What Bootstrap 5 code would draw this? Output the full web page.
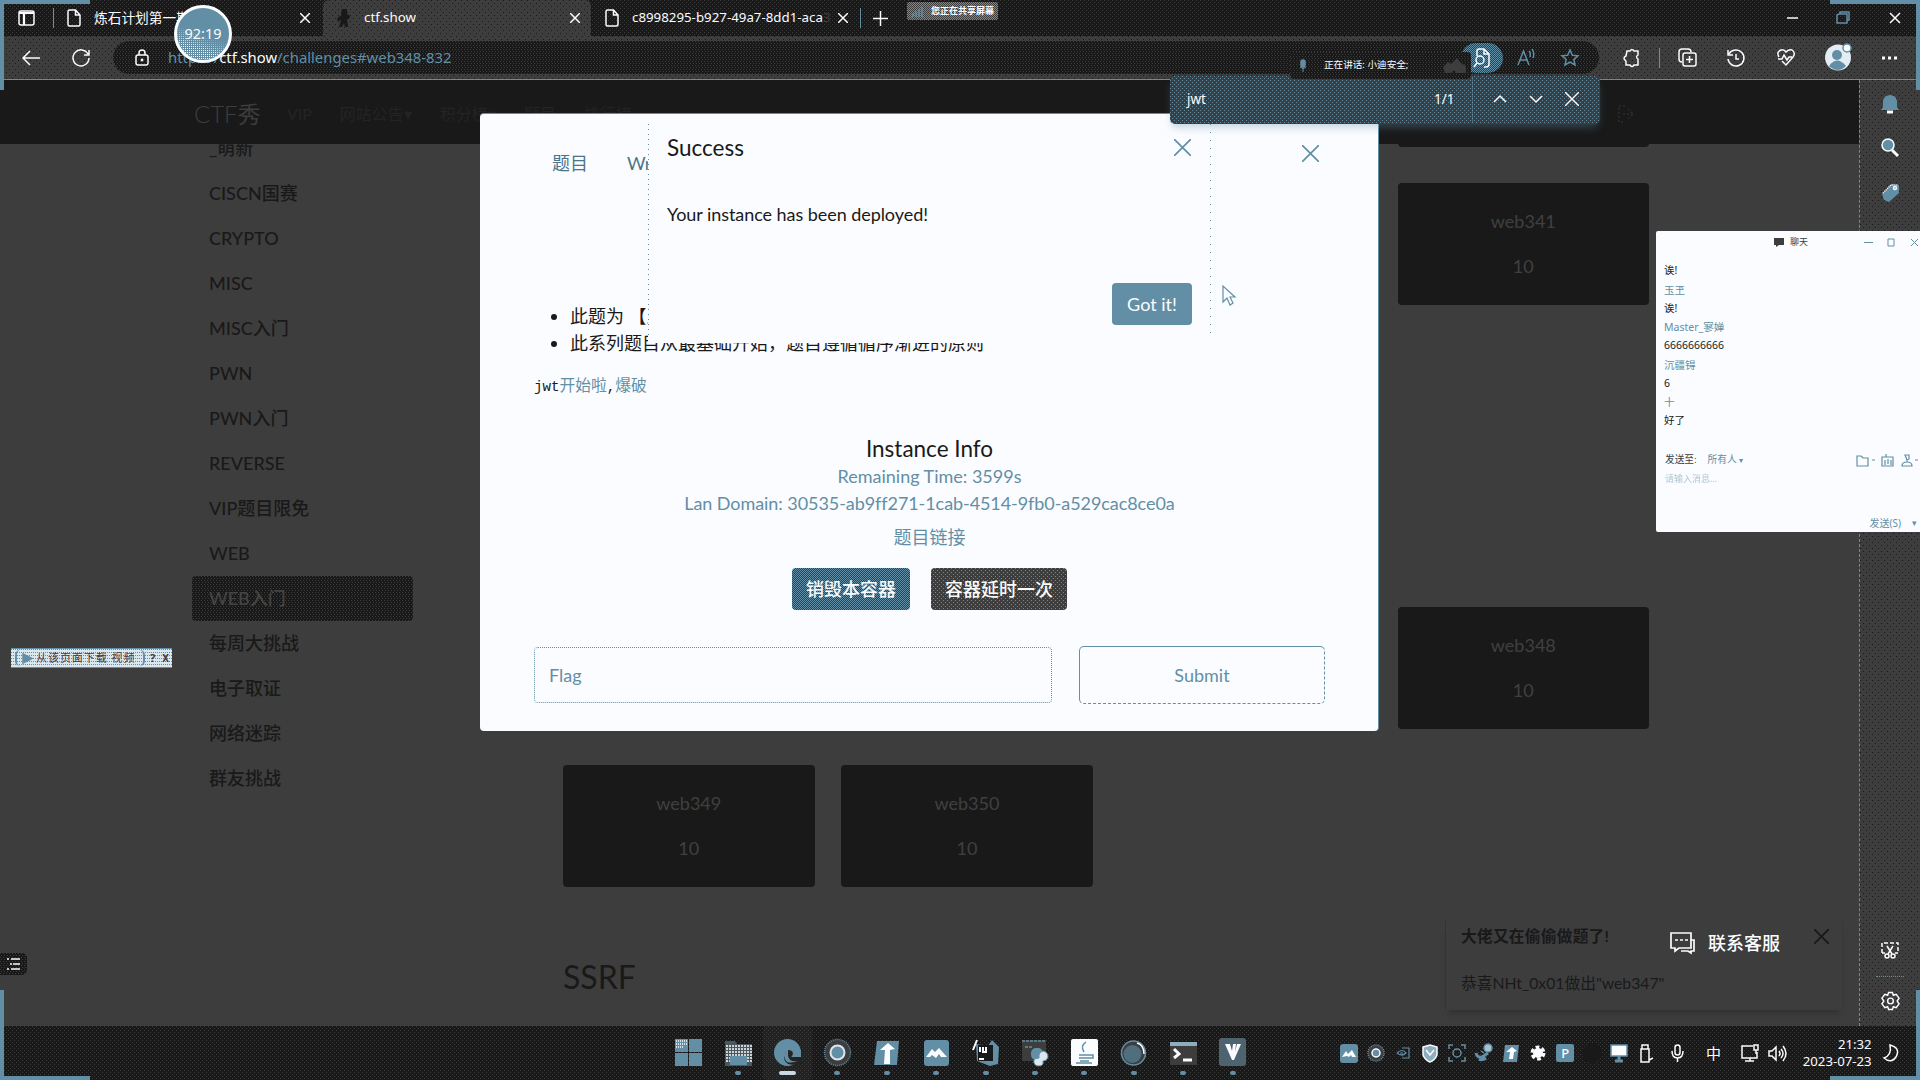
<!DOCTYPE html>
<html lang="zh-CN">
<head>
<meta charset="utf-8">
<title>ctf.show</title>
<link href="https://cdn.jsdelivr.net/npm/bootstrap@5.3.0/dist/css/bootstrap.min.css" rel="stylesheet">
<style>
:root{--ink:#191919;--gray:#3d3d3d;--blue:#628fa5;--paper:#fbfcff}
html,body{width:1920px;height:1080px;overflow:hidden;margin:0}
body{background:var(--gray);color:var(--ink);font-family:"Noto Sans","Noto Sans CJK SC",sans-serif;font-size:15px;line-height:1.5}
svg{display:block;flex:none;fill:none;stroke:currentColor;stroke-width:1.5;overflow:visible}
.fixw{flex:none}
.screen{width:1920px;height:1080px;position:relative;display:flex;flex-direction:column}
.lato{font-family:Lato,"Noto Sans CJK SC",sans-serif}
.grain-d{background-color:#191919;background-image:conic-gradient(from 0deg at 1px 1px,transparent 270deg,#3d3d3d 0),conic-gradient(from 0deg at 1px 1px,transparent 270deg,#3d3d3d 0);background-size:4px 4px;background-position:0 0,2px 2px}
.grain-g{background-color:#3d3d3d;background-image:conic-gradient(from 0deg at 1px 1px,transparent 270deg,#191919 0),conic-gradient(from 0deg at 1px 1px,transparent 270deg,#191919 0);background-size:6px 6px;background-position:0 0,3px 3px}
.grain-m{background-color:#191919;background-image:conic-gradient(from 0deg at 1px 1px,transparent 270deg,#3d3d3d 0),conic-gradient(from 0deg at 1px 1px,transparent 270deg,#3d3d3d 0);background-size:3px 4px;background-position:0 0,1px 2px}
.grain-b{background-color:#3d3d3d;background-image:conic-gradient(from 0deg at 1px 1px,transparent 270deg,#628fa5 0),conic-gradient(from 0deg at 1px 1px,transparent 270deg,#628fa5 0);background-size:4px 4px;background-position:0 0,2px 2px}
.grain-bb{background-color:#3d3d3d;background-image:conic-gradient(from 0deg at 1px 1px,transparent 270deg,#628fa5 0),conic-gradient(from 0deg at 1px 1px,transparent 270deg,#628fa5 0);background-size:2px 2px;background-position:0 0,1px 1px}
.tabs-bar{height:36px;color:var(--paper);font-size:14px;flex:none}
.tab{height:36px;display:flex;align-items:center;white-space:nowrap;overflow:hidden;flex:none}
.vline{width:1px;height:20px;background:var(--blue);flex:none}
.tool-bar{height:44px;color:var(--paper);border-bottom:1px solid var(--blue);flex:none}
.url-pill{height:33px;width:1486px;border-radius:17px;margin-left:23px;color:var(--blue);font-size:14.85px}
.main-row{height:946px;flex:none;display:flex}
.site{width:1860px;overflow:hidden;border-right:1px dashed var(--blue);position:relative}
.side-rail{width:60px;color:var(--paper)}
.site-nav{height:64px;background:var(--ink);position:relative;z-index:2;color:var(--gray);padding-left:194px;padding-top:3px}
.site-body{display:flex;margin-top:-18px;padding-left:192px;font-size:18px}
.cats{width:221px;flex:none}
.cats a{display:flex;align-items:center;height:45px;padding-left:17px;color:var(--ink);text-decoration:none;font-weight:500;border-radius:4px}
.cats a.active{color:#454545}
.board{margin-left:150px;width:1114px;margin-top:-101px}
.chal-grid{display:grid;grid-template-columns:repeat(4,251.5px);gap:36px 26.7px}
.chal{height:122px;background:var(--ink);border-radius:4px;color:#404040;text-align:center;padding-top:16px;line-height:44.5px}
.board h3{font-size:32px;height:107.5px;margin:0;color:var(--ink);font-weight:400;line-height:38px}
.dlg{position:absolute;left:480px;top:113px;width:899px;height:618px;background:var(--paper);border-top:1px solid var(--blue);border-right:1px solid var(--blue);border-radius:4px;z-index:5;font-size:18px;padding:35px 53px 0 54px}
.dlg .tabs-line{height:28px;padding-left:18px;color:#4c7488;line-height:28px}
.dlg ul{margin:126px 0 0;padding-left:36px;line-height:27px;white-space:nowrap}
.pre-line{font-family:"Liberation Mono","Noto Sans CJK SC",monospace;font-size:14.2px;line-height:24px;margin-top:18px;white-space:nowrap}
.pre-line i{font-style:normal;font-size:15.75px;color:var(--blue)}
.inst{text-align:center;color:var(--blue)}
.inst h5{font-size:22.5px;font-weight:400;margin:0;line-height:28px;color:var(--ink)}
.btn-dk{height:42px;color:var(--paper);border-radius:4px;font-size:18px;padding:0 14px;border:0;line-height:42px;font-weight:500}
.flag{width:518px;height:56px;border:1px dotted var(--blue);border-radius:4px;color:var(--blue);padding:0 14px;line-height:54px;margin-top:1px}
.sub{width:246px;height:58px;border:1px dashed var(--blue);border-top-style:solid;border-left-style:solid;border-radius:5px;color:var(--blue);text-align:center;line-height:56px}
.alertbox{position:absolute;left:648px;top:116px;width:563px;height:227px;background:var(--paper);z-index:6;font-size:18px;padding:16px 19px 0 18px}
.alertbox:before,.alertbox:after{content:"";position:absolute;top:8px;height:213px;width:1px;left:0;background:repeating-linear-gradient(var(--blue) 0 1px,transparent 1px 5px)}
.alertbox:after{left:562px;background:repeating-linear-gradient(var(--blue) 0 1px,transparent 1px 8px)}
.got{width:80px;height:42px;background:var(--blue);color:var(--paper);border-radius:4px;line-height:42px;text-align:center}
.findbar{position:absolute;left:1170px;top:76px;width:430px;height:48px;border-radius:5px;color:var(--paper);z-index:8;font-size:13.5px;padding-left:17px;padding-bottom:2px;box-shadow:0 5px 9px -2px #628fa566}
.speak{position:absolute;left:1290px;top:52px;width:181px;height:27px;z-index:9;color:var(--paper);font-size:10.5px;border-radius:4px;padding-left:9px}
.timer{position:absolute;left:174px;top:5px;width:58px;height:58px;border-radius:50%;border:3px solid var(--paper);background:var(--blue);color:var(--paper);z-index:9;display:flex;align-items:center;justify-content:center;font-size:14.5px}
.timer:before{content:"";position:absolute;inset:0;border-radius:50%;background:conic-gradient(from 0deg at 1px 1px,transparent 270deg,#fbfcff 0) 0 0/2px 2px;-webkit-mask:linear-gradient(200deg,transparent 50%,#000 75%);mask:linear-gradient(200deg,transparent 50%,#000 75%)}
.timer span{position:relative}
.share{width:91px;height:18px;border-radius:2px;font-size:9px;font-weight:700;align-self:flex-start;margin-top:2px;line-height:18px;padding-left:5px}
.chat{position:absolute;left:1656px;top:231px;width:264px;height:301px;background:var(--paper);z-index:8;font-size:10.5px;border-radius:2px 0 0 2px;color:var(--ink);overflow:hidden;font-family:"Noto Sans","Noto Sans CJK SC",sans-serif}
.chat-head{height:22px;padding-left:118px;font-size:9px;color:var(--gray)}
.msgs{padding:8px 0 0 8px;height:197px;line-height:18.75px}
.msgs .b{padding-top:1px;margin-bottom:-1px}
.b{color:var(--blue)}
.dl{position:absolute;left:11px;top:648px;width:161px;height:20px;background-color:#dbe7ee;background-image:conic-gradient(from 0deg at 1px 1px,transparent 270deg,#628fa5 0);background-size:2px 3px;z-index:5;font-size:11px;border:1px solid var(--blue);border-width:1px 0;color:var(--gray);line-height:18px;padding-left:4px;white-space:nowrap}
.dl-in{width:130px;border-left:2px solid var(--blue);border-right:2px solid var(--blue);border-radius:5px;height:16px;letter-spacing:.95px;padding-left:6px}
.menu-btn{position:absolute;left:0;top:953px;width:27px;height:22px;z-index:5;color:var(--paper);border-radius:0 5px 5px 0;padding:5px 7px}
.note{position:absolute;left:1445px;top:921px;width:398px;height:89px;z-index:4;font-size:15.75px;border-left:1px dotted #2c2c2c;border-right:1px dotted #333;padding:3px 15px;white-space:nowrap;box-shadow:0 7px 6px -4px #303030}
.serv{position:absolute;left:1650px;top:923px;width:143px;height:40px;z-index:5;color:var(--paper);font-size:18px;font-weight:500;padding-left:20px;gap:13px}
.task{height:54px;flex:none;color:var(--paper);padding-left:664px;position:relative}
.app{width:49.48px;height:54px;display:flex;flex-direction:column;align-items:center;justify-content:flex-end;flex:none}
.app:after{content:"";width:6px;height:4px;border-radius:2px;background:var(--blue);margin:5px 0 5px}
.app.none:after{background:transparent}
.app.on{border-radius:4px;background:#3d3d3d44}
.app.on:after{width:17px;background:#c9d8e2}
.tray{display:flex;align-items:center;height:54px;margin-left:78px}
.tray>span{width:27px;display:flex;justify-content:center;flex:none}
.cnr{position:absolute;width:90px;height:90px;z-index:20;border:0 solid var(--blue);pointer-events:none}
</style>
<script src="https://cdn.jsdelivr.net/npm/bootstrap@5.3.0/dist/js/bootstrap.bundle.min.js"></script>
</head>
<body>
<svg width="0" height="0" style="display:none">
<symbol id="x" viewBox="0 0 10 10"><path d="M0 0 10 10M10 0 0 10"/></symbol>
<symbol id="doc" viewBox="0 0 14 18"><path d="M1 2.500Q1 1 2.500 1H8.500L13 6V15.500Q13 17 11.500 17H2.500Q1 17 1 15.500ZM8.500 1V6H13"/></symbol>
</svg>
<div class="screen">
  <div class="tabs-bar grain-d d-flex align-items-center">
    <svg width="17" height="16" style="margin-left:18px"><rect x="1" y="1" width="15" height="14" rx="2"/><path d="M1 3H16M6 4V15" stroke-width="2.200"/></svg>
    <div class="vline" style="margin-left:18px"></div>
    <div class="tab" style="width:269px;padding-left:13px">
      <svg width="14" height="18"><use href="#doc"/></svg><span style="margin-left:13px;width:197px;font-size:13.700px">炼石计划第一期</span>
      <svg width="10" height="10" style="margin-left:9px"><use href="#x"/></svg>
    </div>
    <div class="tab grain-g" style="width:268px;padding-left:14px;border-radius:6px 6px 0 0">
      <svg width="14" height="20" viewBox="0 0 14 20" style="color:#191919"><path fill="currentColor" stroke="none" d="M5 1H10V6L13 8 12 11H10L11 19H8L7 15 5 19H2L4 12 0 13 1 9 4 8Z"/></svg>
      <span style="margin-left:13px;width:205px;font-size:13.300px">ctf.show</span><svg width="10" height="10" style="margin-left:1px"><use href="#x"/></svg>
    </div>
    <div class="tab" style="width:269px;padding-left:14px">
      <svg width="14" height="18"><use href="#doc"/></svg><span style="margin-left:13px;width:198px;font-size:13.300px">c8998295-b927-49a7-8dd1-aca<span style="color:#3d3d3d">3</span></span>
      <svg width="10" height="10" style="margin-left:8px"><use href="#x"/></svg>
    </div>
    <div class="vline"></div>
    <svg width="15" height="15" style="margin-left:12px"><path d="M7.500 0V15M0 7.500H15"/></svg>
    <div class="share grain-bb d-flex text-nowrap" style="margin-left:19px"><svg width="11" height="11" class="mt-1 me-2 b"><path d="M1 11V7M4 11V5M7 11V3M10 11V1"/></svg>您正在共享屏幕</div>
    <svg width="114" height="12" style="margin-left:788px"><path d="M1 6H12"/><path class="b" d="M53 2H61V11H51V3ZM54 2V0H63V8H61"/><path d="M104 1 114 11M114 1 104 11"/></svg>
  </div>

  <div class="tool-bar grain-g d-flex align-items-center">
    <svg width="18" height="16" style="margin-left:22px"><path d="M18 8H1M8 1 1 8 8 15"/></svg>
    <svg width="18" height="18" style="margin-left:32px"><path d="M16 5A8 8 0 1 0 17 9M17 1V6H12"/></svg>
    <div class="url-pill grain-m d-flex align-items-center">
      <svg width="14" height="17" style="margin-left:22px;color:#fbfcff"><rect x="1" y="6" width="12" height="10" rx="2"/><path d="M4 6V4Q4 1 7 1T10 4V6"/><circle cx="7" cy="11" r=".7"/></svg>
      <span style="margin-left:19px;width:1293px" class="text-nowrap">https://<span style="color:#fbfcff">ctf.show</span>/challenges#web348-832</span>
      <div class="grain-bb rounded-pill d-flex align-items-center justify-content-center fixw" style="width:42px;height:30px;color:#fbfcff"><svg width="18" height="20" style="margin-right:3px"><path d="M5 8V3Q5 1 7 1H12L17 6V16Q17 19 14 19H12M12 1V6H17"/><circle cx="8" cy="12" r="4"/><path d="M5 15 2 19"/></svg></div>
      <svg width="18" height="17" style="margin-left:14px"><path d="M1 16 6.500 2 12 16M3 11H10M12 2Q14 4 13 8M15 0Q18 4 16 9"/></svg>
      <svg width="18" height="17" viewBox="0 0 18 17" style="margin-left:26px"><path d="M9 1 11.400 6.200 17 6.800 12.800 10.500 14 16 9 13.200 4 16 5.200 10.500 1 6.800 6.600 6.200Z"/></svg>
    </div>
    <svg width="18" height="18" viewBox="0 0 18 18" style="margin-left:24px"><path d="M4 2H7Q9-1 11 2H15V6Q12 8 15 10V16H11Q9 19 7 16H3V12Q-1 9 3 7Z"/></svg>
    <div class="vline" style="margin-left:18px"></div>
    <svg width="18" height="19" style="margin-left:18px"><path d="M4 14Q1 14 1 11V4Q1 1 4 1H10Q13 1 13 4"/><rect x="5" y="5" width="13" height="13" rx="2"/><path d="M11.500 8V15M8 11.500H15"/></svg>
    <svg width="18" height="18" style="margin-left:31px"><path d="M2 5A8 8 0 1 1 1 10M1 1V6H6M9 5V10H12"/></svg>
    <svg width="18" height="17" style="margin-left:32px"><path d="M2 8Q-1 3 4 1 7 0 9 3 12 0 15 1 19 4 16 8L9 16 5 12M1 10H5L7 6 10 11 12 8H15"/></svg>
    <svg width="26" height="27" style="margin-left:30px"><circle cx="13" cy="13.500" r="13" fill="#e4edf5" stroke="none"/><circle cx="12" cy="11" r="5" fill="#628fa5" stroke="none"/><path d="M4 22Q12 11 21 22 13 30 4 22" fill="#628fa5" stroke="none"/><circle cx="22" cy="4" r="4" fill="#fbfcff" stroke="#628fa5"/></svg>
    <svg width="15" height="4" style="margin-left:31px"><path d="M0 2H3M6 2H9M12 2H15" stroke-width="3"/></svg>
  </div>

  <div class="main-row">
    <div class="site lato">
      <div class="site-nav d-flex align-items-center"><span style="font-size:24px;font-weight:300;width:93px;line-height:26px">CTF<b style="font-size:23px">秀</b></span><span style="color:#242424;font-size:16px;word-spacing:24px;width:900px;white-space:nowrap">VIP 网站公告▾ 积分榜▾ 题目 排行榜</span>
      <svg width="17" height="18" style="margin-left:431px;color:#2c2c2c"><path stroke-dasharray="2" d="M7 1H1V17H7M5 9H15M10 4 15 9 10 14"/></svg></div>
      <div class="site-body">
        <nav class="cats"><a>_萌新</a><a>CISCN国赛</a><a>CRYPTO</a><a>MISC</a><a>MISC入门</a><a>PWN</a><a>PWN入门</a><a>REVERSE</a><a>VIP题目限免</a><a>WEB</a><a class="active grain-m">WEB入门</a><a>每周大挑战</a><a>电子取证</a><a>网络迷踪</a><a>群友挑战</a></nav>
        <div class="board">
          <div class="chal-grid">
            <div class="chal"></div><div class="chal"></div><div class="chal"></div><div class="chal"></div>
            <div class="chal"></div><div class="chal"></div><div class="chal"></div><div class="chal">web341<br>10</div>
            <div class="chal"></div><div class="chal"></div><div class="chal"></div>
          </div>
          <div style="height:144px"></div>
          <div class="chal-grid">
            <div class="chal"></div><div class="chal"></div><div class="chal"></div><div class="chal">web348<br>10</div>
            <div class="chal">web349<br>10</div><div class="chal">web350<br>10</div>
          </div>
          <h3 style="padding-top:71px">SSRF</h3>
        </div>
      </div>
    </div>
    <div class="side-rail grain-g d-flex flex-column align-items-center">
      <svg width="18" height="19" style="margin-top:15px"><path d="M0 15 2 12V6Q3 0 9 0T16 6V12L18 15Z" fill="#628fa5" stroke="none"/><path d="M6 17H12" stroke-width="3"/></svg>
      <svg width="19" height="20" style="margin-top:24px"><circle cx="7" cy="7" r="6" fill="#628fa5"/><path d="M11 12 17 18" stroke-width="3"/></svg>
      <svg width="19" height="20" style="margin-top:25px"><path d="M1 11 10 1 18 2V10L8 19 3 17Z" fill="#628fa5" stroke="none"/><path d="M2 10 10 2H17" stroke-dasharray="1 1"/><circle cx="14" cy="5" r="1.500"/></svg>
      <svg width="18" height="18" style="margin-top:738px"><path d="M1 12V2H17V12H14M1 12H4" stroke-dasharray="4 2"/><path d="M6 5 11 13M12 5 7 13"/><circle cx="6" cy="15" r="2"/><circle cx="12" cy="15" r="2"/></svg>
      <div style="width:28px;border-top:1px dotted #628fa5;margin-top:17px"></div>
      <svg width="19" height="20" viewBox="0 0 20 20" style="margin-top:14px"><path d="M8 1H12L13 4 16 3 19 7 17 10 19 13 16 17 13 16 12 19H8L7 16 4 17 1 13 3 10 1 7 4 3 7 4Z"/><circle cx="10" cy="10" r="3"/></svg>
    </div>
  </div>

  <div class="task grain-d d-flex">
    <div class="app none"><svg width="27" height="27"><path d="M0 0H13V13H0ZM14 0H27V13H14ZM0 14H13V27H0ZM14 14H27V27H14Z" fill="#628fa5" stroke="none"/><path d="M1 2H12M1 5H12M1 8H9" stroke-dasharray="1 1"/></svg></div>
    <div class="app"><svg width="27" height="25"><path d="M0 0H10L12 3H27V25H0Z" fill="#49575f" stroke="none"/><path d="M1 5H27M1 8H27M1 11H27M1 14H27M1 17H27M1 20H27" stroke-dasharray="2 1"/><rect x="5" y="15" width="17" height="9" fill="#628fa5" stroke="none"/></svg></div>
    <div class="app on"><svg width="27" height="27"><circle cx="13.500" cy="13.500" r="13.500" fill="#628fa5" stroke="none"/><path d="M14 11Q7 17 13 23 19 25 27 20L27 24Q20 27 14 25 6 19 14 11" fill="#242424" stroke="none"/><path d="M14 11Q21 11 18 18L27 17V21Q16 25 14 17Z" fill="#242424" stroke="none"/><path d="M17 18H27V12L20 10Q21 15 17 18" fill="#628fa5" stroke="none"/></svg></div>
    <div class="app"><svg width="27" height="27"><circle cx="13.500" cy="13.500" r="13" fill="#3d3d3d" stroke="#628fa5" stroke-dasharray="1 1"/><circle cx="13.500" cy="13.500" r="7" fill="#628fa5" stroke="#dce6ef" stroke-width="2"/></svg></div>
    <div class="app"><svg width="26" height="26"><path d="M3 1H25L23 25H0Z" fill="#628fa5" stroke="none"/><path d="M14 3 21 9 16 10V24H10L11 10 6 10Z" fill="#fbfcff" stroke="none"/></svg></div>
    <div class="app"><svg width="25" height="26"><rect width="25" height="26" rx="3" fill="#628fa5" stroke="none"/><path d="M2 17 8 9 11 12 15 8 23 17H17L15 14 12 18 8 15 6 17Z" fill="#fbfcff" stroke="none"/></svg></div>
    <div class="app"><svg width="27" height="27"><path d="M4 5 16 7 20 1 27 8 26 25 18 27 5 22Z" fill="#628fa5" stroke="none"/><rect x="6" y="6" width="15" height="16" fill="#191919" stroke="none"/><path d="M8 8V13M11 8V13H14V8M7 20H12M5 1 1 11" stroke-width="2"/></svg></div>
    <div class="app"><svg width="26" height="26"><rect width="24" height="21" fill="#3d3d3d" stroke="none"/><path d="M0 1H24M3 7H10" stroke="#628fa5" stroke-dasharray="3 1"/><rect x="9" y="8" width="12" height="12" rx="5" fill="#628fa5" stroke="none"/><path d="M17 18V15Q17 12 21 11 26 12 26 17 25 21 21 21V24Q20 26 16 26 11 25 12 20 13 18 17 18Z" fill="#dce6ef" stroke="#628fa5" stroke-width="1"/></svg></div>
    <div class="app"><svg width="27" height="27"><rect width="27" height="27" rx="2" fill="#fbfcff" stroke="none"/><path d="M15 3Q9 7 13 13M8 16H19M8 19H19M9 22H18M19 16H22V19H19M5 24H21" stroke="#628fa5"/></svg></div>
    <div class="app"><svg width="25" height="26"><circle cx="12.500" cy="13" r="12" fill="#3d3d3d" stroke="#628fa5"/><circle cx="11.500" cy="14" r="9" fill="#4f6f7f" stroke="none"/><path d="M16 3Q23 5 23 14" stroke-width="1.500"/></svg></div>
    <div class="app"><svg width="27" height="24"><rect width="27" height="23" fill="#3d3d3d" stroke="none"/><path d="M0 2H27" stroke="#8eaebd" stroke-width="4"/><path d="M4 7 9 12 4 16M13 18H22" stroke-width="3"/></svg></div>
    <div class="app"><svg width="27" height="28"><rect width="27" height="28" rx="3" fill="#4d6470" stroke="none"/><path d="M6 6H11L13 13 14 6H17L16 14 18 6H22L15 22H13Z" fill="#fbfcff" stroke="none"/></svg></div>
    <div class="tray">
      <span><svg width="18" height="19"><rect width="18" height="19" rx="3" fill="#628fa5" stroke="none"/><path d="M2 13 6 7 8 10 12 6 16 13H12L11 11 9 13 7 12Z" fill="#fbfcff" stroke="none"/></svg></span>
      <span><svg width="18" height="18"><circle cx="9" cy="9" r="8" fill="#3d3d3d" stroke="#628fa5" stroke-dasharray="1 1"/><circle cx="9" cy="9" r="4" fill="#628fa5"/></svg></span>
      <span class="b"><svg width="13" height="12"><path d="M0 6Q5 1 9 6 5 10 0 6M5 1H12V11H5M3 6H6" stroke-width="1.200"/></svg></span>
      <span><svg width="16" height="19"><path d="M1 3 8 1 15 3V11Q13 16 8 18 3 16 1 11Z" fill="#8caebe"/><path d="M4 6 8 11 12 6"/></svg></span>
      <span class="b"><svg width="18" height="18"><path d="M1 5V1H5M13 1H17V5M17 13V17H13M5 17H1V13"/><circle cx="9" cy="9" r="4"/></svg></span>
      <span class="b"><svg width="18" height="18"><path d="M1 9Q2 14 7 13L13 9M4 15Q7 17 11 14" stroke-width="3"/><path d="M6 7 9 9"/><circle cx="13" cy="4" r="4" fill="#a9c2d0"/></svg></span>
      <span><svg width="16" height="17"><path d="M2 0H16L14 17H0Z" fill="#628fa5" stroke="none"/><path d="M9 2 14 6 11 7 10 14H6L7 7 3 7Z" fill="#fbfcff" stroke="none"/></svg></span>
      <span><svg width="16" height="16"><circle cx="8" cy="8" r="5" fill="#fbfcff" stroke="none"/><circle cx="8" cy="8" r="6" stroke-width="3" stroke-dasharray="3.800 2.480"/></svg></span>
      <span><b class="text-center" style="width:18px;height:18px;line-height:18px;background:#628fa5;font-size:13px;font-weight:500;border-radius:2px">P</b></span>
      <span><i class="rounded-circle" style="width:20px;height:20px;background:#191919"></i></span>
      <span><svg width="18" height="18"><rect x="1" y="1" width="16" height="11" fill="#fbfcff" stroke="#628fa5"/><path d="M9 12V16M5 17H13" stroke="#628fa5" stroke-width="3"/></svg></span>
      <span style="width:28px"><svg width="14" height="19"><path d="M2 1H8V5H2ZM1 5H9V18H1ZM9 16 13 14"/></svg></span>
      <span style="width:33px"><svg width="13" height="18"><rect x="4" y="1" width="5" height="10" rx="2.500"/><path d="M1 7Q1 14 6.500 14T12 7M6.500 14V18"/></svg></span>
      <span style="width:40px;font-size:15px;line-height:20px">中</span>
      <span style="width:32px"><svg width="18" height="18"><path d="M12 2H1V14H16V8M9 14V17M4 17H13"/><rect x="13" y="1" width="4" height="5"/><path d="M15 6V10"/></svg></span>
      <span style="width:24px"><svg width="19" height="17"><path d="M1 6H4L8 2V15L4 11H1ZM11 6Q13 8.500 11 11M13 4Q17 8.500 13 13M15 1Q21 8.500 15 16"/></svg></span>
      <div class="text-end fixw" style="width:82px;font-size:13.200px;line-height:17.500px">21:32<br>2023-07-23</div>
      <svg width="15" height="18" style="margin-left:11px"><path d="M7 1Q18 4 13 13 8 20 1 14 9 11 7 1Z"/></svg>
    </div>
  </div>

  <div class="dlg lato">
    <svg class="position-absolute b" width="17" height="17" style="left:822px;top:31px"><use href="#x" stroke-width="1"/></svg>
    <div class="tabs-line"><span>题目</span><span style="margin-left:39px">Wr</span></div>
    <ul><li>此题为 【入</li><li>此系列题目从最基础开始，题目遵循循序渐进的原则</li></ul>
    <div class="pre-line">jwt<i>开始啦</i>,<i>爆破</i></div>
    <div class="inst" style="padding-top:36px">
      <h5>Instance Info</h5>
      <div style="line-height:27px">Remaining Time: 3599s</div>
      <div style="line-height:26px;letter-spacing:-.07px">Lan Domain: 30535-ab9ff271-1cab-4514-9fb0-a529cac8ce0a</div>
      <div style="line-height:27px;margin-top:8px">题目链接</div>
      <div class="d-flex justify-content-center" style="gap:21px;margin-top:17px"><button class="btn-dk grain-bb">销毁本容器</button><button class="btn-dk grain-b">容器延时一次</button></div>
    </div>
    <div class="d-flex justify-content-between" style="margin-top:36px"><div class="flag">Flag</div><div class="sub">Submit</div></div>
  </div>

  <div class="alertbox lato">
    <div class="d-flex justify-content-between align-items-center" style="height:31px;font-size:22.500px;padding:0 1px"><span>Success</span><svg width="17" height="17" class="b"><use href="#x" stroke-width="1"/></svg></div>
    <div style="margin:38px 0 0 1px;line-height:27px;letter-spacing:-.06px">Your instance has been deployed!</div>
    <div class="got ms-auto" style="margin-top:55px">Got it!</div>
  </div>
  <svg class="position-absolute b" width="14" height="22" style="left:1222px;top:285px;z-index:7"><path d="M1 1V17L5 13 8 20 11 18 8 12H13Z" stroke-width="1.200"/></svg>

  <div class="findbar grain-b d-flex align-items-center"><span style="width:247px">jwt</span><span style="width:38px">1/1</span><div class="vline" style="height:46px;opacity:.5"></div>
    <svg width="14" height="8" style="margin-left:20px"><path d="M1 7 7 1 13 7"/></svg><svg width="14" height="8" style="margin-left:22px"><path d="M1 1 7 7 13 1"/></svg><svg width="14" height="14" style="margin-left:22px"><use href="#x" stroke-width="1"/></svg></div>
  <div class="speak grain-m d-flex align-items-center text-nowrap"><svg width="8" height="12" class="b"><rect x="2" y="0" width="4" height="7" rx="2" fill="currentColor"/><path d="M4 7V12M1 7Q4 10 7 7" stroke-width="1"/></svg><span style="margin-left:17px;width:119px;font-size:9.600px">正在讲话: 小迪安全;</span><svg width="23" height="16"><path d="M0 9 5 4 8 6 14 0 18 5 23 8V15H13L11 12 8 15H2Z" fill="#3d3d3d" stroke="none"/></svg></div>
  <div class="timer"><span>92:19</span></div>

  <div class="chat">
    <div class="chat-head d-flex align-items-center"><svg width="10" height="9"><path d="M0 0H10V7H5L2 9V7H0Z" fill="currentColor" stroke="none"/></svg><span style="margin-left:6px;width:76px">聊天</span><svg width="56" height="9" class="b"><path d="M0 4.500H9M24 1H30V8H24ZM47 1 54 8M54 1 47 8" stroke-width="1"/></svg></div>
    <div class="msgs"><div>诶!</div><div class="b">玉玊</div><div>诶!</div><div class="b">Master_寥婵</div><div>6666666666</div><div class="b">沉疆锝</div><div>6</div><div class="b">十</div><div>好了</div></div>
    <div class="d-flex align-items-center b" style="height:20px;padding-left:9px;font-size:9.700px"><span style="width:43px;color:#3d3d3d">发送至:</span><span style="width:150px">所有人 <small>▾</small></span>
      <svg width="64" height="13"><path d="M1 2H5L7 4H12V12H1ZM16 6H19M26 3H37V12H26ZM29 6V11M32 5V10M35 6V11M30 0V3M49 1H53V5L51 6ZM51 6V8Q46 8 46 12H56Q56 8 51 8M59 6H62" stroke-width="1.200"/></svg></div>
    <div class="b" style="padding-left:9px;font-size:9px;line-height:18px;opacity:.5">请输入消息...</div>
    <div class="b d-flex justify-content-end" style="font-size:10px;padding:25px 3px 0 0;line-height:20px"><span style="margin-right:11px">发送(S)</span><small>▾</small></div>
  </div>

  <div class="dl d-flex align-items-center"><div class="dl-in d-flex align-items-center"><svg width="9" height="9" class="me-1 b"><path d="M0 0 9 4.500 0 9Z" fill="currentColor"/></svg>从该页面下载 视频</div><b style="margin-left:5px">?</b><b style="margin-left:7px;font-size:10px">X</b></div>
  <div class="menu-btn grain-m"><svg width="13" height="12"><path d="M0 1H2M4 1H13M3 6H5M6 6H13M0 11H2M4 11H13"/></svg></div>
  <div class="note lato"><div style="line-height:24px;font-weight:700;letter-spacing:.2px">大佬又在偷偷做题了!</div><div style="line-height:24px;margin-top:23px">恭喜NHt_0x01做出"web347"</div>
    <svg class="position-absolute" width="15" height="15" style="left:368px;top:8px"><use href="#x" stroke-width="1.200"/></svg></div>
  <div class="serv lato d-flex align-items-center"><svg width="25" height="22"><path d="M1 1H21V16H9L5 19V16H1ZM21 8H24V19H21V21L18 19H11M5 8H8M10 8H13M15 8H18" stroke-width="1.700"/></svg><span>联系客服</span></div>

  <div class="cnr" style="left:0;top:0;border-top-width:4px;border-left-width:4px"></div>
  <div class="cnr" style="right:0;top:0;border-top-width:4px;border-right-width:4px"></div>
  <div class="cnr" style="left:0;bottom:0;border-bottom-width:4px;border-left-width:4px"></div>
  <div class="cnr" style="right:0;bottom:0;border-bottom-width:4px;border-right-width:4px"></div>
</div>
</body>
</html>
